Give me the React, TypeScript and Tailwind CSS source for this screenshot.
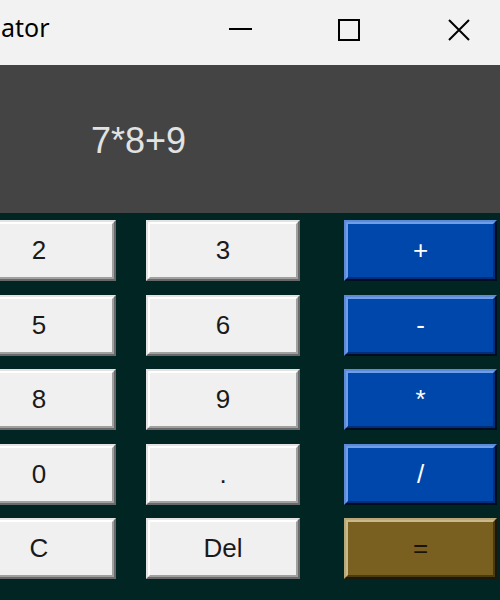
import React from "react";

type Kind = "light" | "blue" | "gold";

function Btn({ label, kind, extra = "" }: { label: string; kind: Kind; extra?: string }) {
  if (kind === "light") {
    return (
      <div className={`h-[61px] border-2 border-t-[#e3e3e3] border-l-[#e3e3e3] border-r-[#696969] border-b-[#696969] ${extra}`}>
        <div className="h-full border-2 border-t-white border-l-white border-r-[#a0a0a0] border-b-[#a0a0a0] bg-[#f0f0f0] flex items-center justify-center text-[26px] text-[#1a1a1a] font-['Liberation_Sans',sans-serif]">
          {label}
        </div>
      </div>
    );
  }
  if (kind === "blue") {
    return (
      <div className={`h-[61px] border-2 border-t-[#5b8ad6] border-l-[#5b8ad6] border-r-[#000d20] border-b-[#000d20] ${extra}`}>
        <div className="h-full border-2 border-t-[#6f9de8] border-l-[#6f9de8] border-r-[#002e78] border-b-[#002e78] bg-[#0047ab] flex items-center justify-center text-[26px] text-white font-['Liberation_Sans',sans-serif]">
          {label}
        </div>
      </div>
    );
  }
  return (
    <div className={`h-[61px] border-2 border-t-[#b8a878] border-l-[#b8a878] border-r-[#1e1808] border-b-[#1e1808] ${extra}`}>
      <div className="h-full border-2 border-t-[#c9b98c] border-l-[#c9b98c] border-r-[#4a3c12] border-b-[#4a3c12] bg-[#7a6020] flex items-center justify-center text-[26px] text-[#1a1408] font-['Liberation_Sans',sans-serif]">
        {label}
      </div>
    </div>
  );
}

const rows: [string, string, string, Kind][] = [
  ["2", "3", "+", "blue"],
  ["5", "6", "-", "blue"],
  ["8", "9", "*", "blue"],
  ["0", ".", "/", "blue"],
  ["C", "Del", "=", "gold"],
];

export default function App() {
  return (
    <div className="w-[500px] h-[600px] overflow-hidden flex flex-col bg-[#012522]">
      <div className="h-[65px] shrink-0 bg-[#f2f2f2] flex items-start overflow-hidden">
        <div className="w-[186px] shrink-0 pt-[15px] pl-[1px] text-[25px] text-black font-['Noto_Sans',sans-serif] leading-none">
          ator
        </div>
        <div className="w-[108px] shrink-0 pt-[19px] flex items-center justify-center">
          <svg width="23" height="22" viewBox="0 0 23 22">
            <rect x="0" y="9" width="23" height="2" fill="#000" />
          </svg>
        </div>
        <div className="w-[109px] shrink-0 pt-[19px] flex items-center justify-center">
          <svg width="22" height="22" viewBox="0 0 22 22">
            <rect x="1" y="1" width="20" height="20" fill="none" stroke="#000" strokeWidth="2" />
          </svg>
        </div>
        <div className="w-[97px] shrink-0 pt-[19px] flex items-center pl-[45px]">
          <svg width="22" height="22" viewBox="0 0 22 22">
            <path d="M1 1 L21 21 M21 1 L1 21" stroke="#000" strokeWidth="2" fill="none" />
          </svg>
        </div>
      </div>
      <div className="h-[148px] shrink-0 bg-[#444444] flex items-center pl-[91px] pt-[4px]">
        <span className="text-[36px] text-[#e2e2e2] font-['Liberation_Sans',sans-serif]">7*8+9</span>
      </div>
      <div className="ml-[-38px] mt-[7px] grid grid-cols-[154px_154px_167px] gap-x-[30px] gap-y-[13.5px]">
        {rows.map(([a, b, c, k]) => (
          <React.Fragment key={a}>
            <Btn label={a} kind="light" />
            <Btn label={b} kind="light" />
            <Btn label={c} kind={k} extra="ml-[14px]" />
          </React.Fragment>
        ))}
      </div>
    </div>
  );
}
